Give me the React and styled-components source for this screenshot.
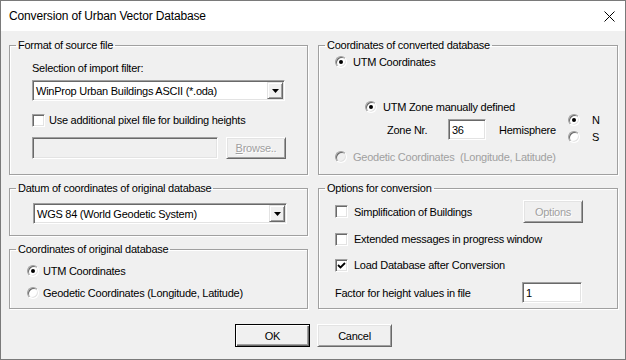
import styled, { createGlobalStyle } from "styled-components";

const GlobalStyle = createGlobalStyle`
  body {
    margin: 0;
    background: #fff;
    font-family: "Liberation Sans", Arial, sans-serif;
  }
`

const Window = styled.div`
  width: 626px;
  height: 360px;
  box-sizing: border-box;
  border: 1px solid #7a7a7a;
  background: #f0f0f0;
  display: flex;
  flex-direction: column;
  font-size: 11px;
  letter-spacing: -0.25px;
  color: #000;
`

const TitleBar = styled.div`
  height: 30px;
  flex: none;
  background: #fff;
  display: flex;
  align-items: center;
  justify-content: space-between;
  padding: 0 10px 0 8px;
  font-size: 12px;
  letter-spacing: -0.15px;
`

const Body = styled.div`
  padding: 8px 7px 0 8px;
`

const Columns = styled.div`
  display: flex;
  gap: 10px;
`

const Column = styled.div`
  width: ${props => props.$w}px;
  display: flex;
  flex-direction: column;
  gap: 7px;
`

const Fieldset = styled.fieldset`
  margin: 0;
  padding: 0;
  height: ${props => props.$h}px;
  box-sizing: border-box;
  border: 1px solid #a0a0a0;
  box-shadow: 1px 1px 0 #fff, inset 1px 1px 0 #fff;
  min-inline-size: 0;
`

const Legend = styled.legend`
  margin-left: 6px;
  padding: 0 2px;
  line-height: 13px;
`

const Inner = styled.div`
  padding-left: ${props => props.$pl || 0}px;
  padding-right: ${props => props.$pr || 0}px;
`

const Row = styled.div`
  display: flex;
  align-items: center;
  height: ${props => props.$h || 14}px;
  margin-top: ${props => props.$mt || 0}px;
  margin-left: ${props => props.$ml || 0}px;
`

const Text = styled.span`
  color: ${props => props.$disabled ? "#a0a0a0" : "#000"};
  white-space: pre;
  width: ${props => props.$w ? props.$w + "px" : "auto"};
  margin-left: ${props => props.$ml || 0}px;
  flex: none;
`

const sunken = `
  box-sizing: border-box;
  border: 1px solid;
  border-color: #a0a0a0 #fff #fff #a0a0a0;
  box-shadow: inset 1px 1px 0 #696969, inset -1px -1px 0 #e3e3e3;
`

const Field = styled.div`
  ${sunken}
  width: ${props => props.$w}px;
  height: ${props => props.$h || 21}px;
  background: ${props => props.$disabled ? "#f0f0f0" : "#fff"};
  display: flex;
  align-items: center;
  padding-left: 3px;
  margin-left: ${props => props.$ml === "auto" ? "auto" : (props.$ml || 0) + "px"};
  margin-right: ${props => props.$mr || 0}px;
  flex: none;
`

const ArrowBox = styled.div`
  margin-left: auto;
  width: 16px;
  height: 17px;
  margin-right: 1px;
  box-sizing: border-box;
  border: 1px solid;
  border-color: #e3e3e3 #696969 #696969 #e3e3e3;
  box-shadow: inset 1px 1px 0 #fff, inset -1px -1px 0 #a0a0a0;
  background: #f0f0f0;
  display: flex;
  align-items: center;
  justify-content: center;
`

const Button = styled.button`
  width: ${props => props.$w || 75}px;
  height: ${props => props.$h || 23}px;
  margin-left: ${props => props.$ml === "auto" ? "auto" : (props.$ml || 0) + "px"};
  padding: 0;
  font-family: inherit;
  font-size: 11px;
  letter-spacing: -0.25px;
  background: #f0f0f0;
  color: ${props => props.disabled ? "#a0a0a0" : "#000"};
  text-shadow: ${props => props.disabled ? "1px 1px 0 #fff" : "none"};
  box-sizing: border-box;
  border: 1px solid;
  border-color: ${props => props.$default ? "#000" : "#fff #696969 #696969 #fff"};
  box-shadow: ${props => props.$default
    ? "inset 1px 1px 0 #fff, inset -1px -1px 0 #696969, inset -2px -2px 0 #a0a0a0"
    : "inset 1px 1px 0 #e3e3e3, inset -1px -1px 0 #a0a0a0"};
  flex: none;

  u {
    text-decoration: underline;
  }
`

const CheckBox = styled.span`
  ${sunken}
  width: 13px;
  height: 13px;
  background: #fff;
  flex: none;
  margin-right: ${props => props.$gap}px;
  display: flex;
  align-items: center;
  justify-content: center;
`

const RadioCircle = styled.span`
  ${sunken}
  width: 12px;
  height: 12px;
  border-radius: 50%;
  background: ${props => props.$disabled ? "#f0f0f0" : "#fff"};
  flex: none;
  margin-right: ${props => props.$gap}px;
  display: flex;
  align-items: center;
  justify-content: center;

  &::after {
    content: "";
    display: ${props => props.$on ? "block" : "none"};
    width: 4px;
    height: 4px;
    border-radius: 50%;
    background: #000;
  }
`

const RadioCol = styled.div`
  display: flex;
  flex-direction: column;
  gap: 3px;
  margin-top: -2px;
`

const ButtonRow = styled.div`
  display: flex;
  justify-content: center;
  gap: 7px;
  margin-top: 15px;
`

const Group = ({ title, h, pl, pr, children }) => (
  <Fieldset $h={h}>
    <Legend>{title}</Legend>
    <Inner $pl={pl} $pr={pr}>{children}</Inner>
  </Fieldset>
)

const Select = ({ w, children }) => (
  <Field $w={w}>
    <Text>{children}</Text>
    <ArrowBox>
      <svg width="7" height="4" viewBox="0 0 7 4">
        <path d="M0 0 H7 L3.5 4 Z" fill="#000" />
      </svg>
    </ArrowBox>
  </Field>
)

const Check = ({ on, gap = 6 }) => (
  <CheckBox $gap={gap}>
    {on && (
      <svg width="9" height="9" viewBox="0 0 9 9">
        <path d="M1 4 L3.5 6.5 L8 2" fill="none" stroke="#000" strokeWidth="1.8" />
      </svg>
    )}
  </CheckBox>
)

function App() {
  return (
    <>
      <GlobalStyle />
      <Window>
        <TitleBar>
          <span>Conversion of Urban Vector Database</span>
          <svg width="11" height="11" viewBox="0 0 11 11">
            <path d="M0.5 0.5 L10.5 10.5 M10.5 0.5 L0.5 10.5" stroke="#000" strokeWidth="1" />
          </svg>
        </TitleBar>
        <Body>
          <Columns>
            <Column $w={299}>
              <Group title="Format of source file" h={136} pl={22}>
                <Row $h={13} $mt={9}><Text>Selection of import filter:</Text></Row>
                <Row $h={21} $mt={6}>
                  <Select w={253}>WinProp Urban Buildings ASCII (*.oda)</Select>
                </Row>
                <Row $mt={12}>
                  <Check gap={4} />
                  <Text>Use additional pixel file for building heights</Text>
                </Row>
                <Row $h={22} $mt={10}>
                  <Field $w={186} $h={22} $disabled />
                  <Button $w={60} $h={22} $ml={8} disabled><u>B</u>rowse..</Button>
                </Row>
              </Group>
              <Group title="Datum of coordinates of original database" h={54} pl={23}>
                <Row $h={21} $mt={8}>
                  <Select w={254}>WGS 84 (World Geodetic System)</Select>
                </Row>
              </Group>
              <Group title="Coordinates of original database" h={66} pl={17}>
                <Row $mt={8}>
                  <RadioCircle $on $gap={4} />
                  <Text>UTM Coordinates</Text>
                </Row>
                <Row $mt={8}>
                  <RadioCircle $gap={4} />
                  <Text>Geodetic Coordinates (Longitude, Latitude)</Text>
                </Row>
              </Group>
            </Column>
            <Column $w={300}>
              <Group title="Coordinates of converted database" h={136} pl={16}>
                <Row $mt={3}>
                  <RadioCircle $on $gap={6} />
                  <Text>UTM Coordinates</Text>
                </Row>
                <Row $mt={31} $ml={30}>
                  <RadioCircle $on $gap={6} />
                  <Text>UTM Zone manually defined</Text>
                </Row>
                <Row $h={21} $mt={5} $ml={52}>
                  <Text $w={61}>Zone Nr.</Text>
                  <Field $w={38}>36</Field>
                  <Text $w={69} $ml={13}>Hemisphere</Text>
                  <RadioCol>
                    <Row>
                      <RadioCircle $on $gap={12} />
                      <Text>N</Text>
                    </Row>
                    <Row>
                      <RadioCircle $gap={12} />
                      <Text>S</Text>
                    </Row>
                  </RadioCol>
                </Row>
                <Row $mt={10}>
                  <RadioCircle $disabled $gap={6} />
                  <Text $disabled>Geodetic Coordinates  (Longitude, Latitude)</Text>
                </Row>
              </Group>
              <Group title="Options for conversion" h={127} pl={16} pr={34}>
                <Row $h={23} $mt={5}>
                  <Check />
                  <Text>Simplification of Buildings</Text>
                  <Button $w={60} $ml="auto" disabled>Options</Button>
                </Row>
                <Row $mt={9}>
                  <Check />
                  <Text>Extended messages in progress window</Text>
                </Row>
                <Row $mt={12}>
                  <Check on />
                  <Text>Load Database after Conversion</Text>
                </Row>
                <Row $h={21} $mt={10}>
                  <Text>Factor for height values in file</Text>
                  <Field $w={60} $ml="auto" $mr={1}>1</Field>
                </Row>
              </Group>
            </Column>
          </Columns>
          <ButtonRow>
            <Button $default>OK</Button>
            <Button>Cancel</Button>
          </ButtonRow>
        </Body>
      </Window>
    </>
  );
}

export default App;
